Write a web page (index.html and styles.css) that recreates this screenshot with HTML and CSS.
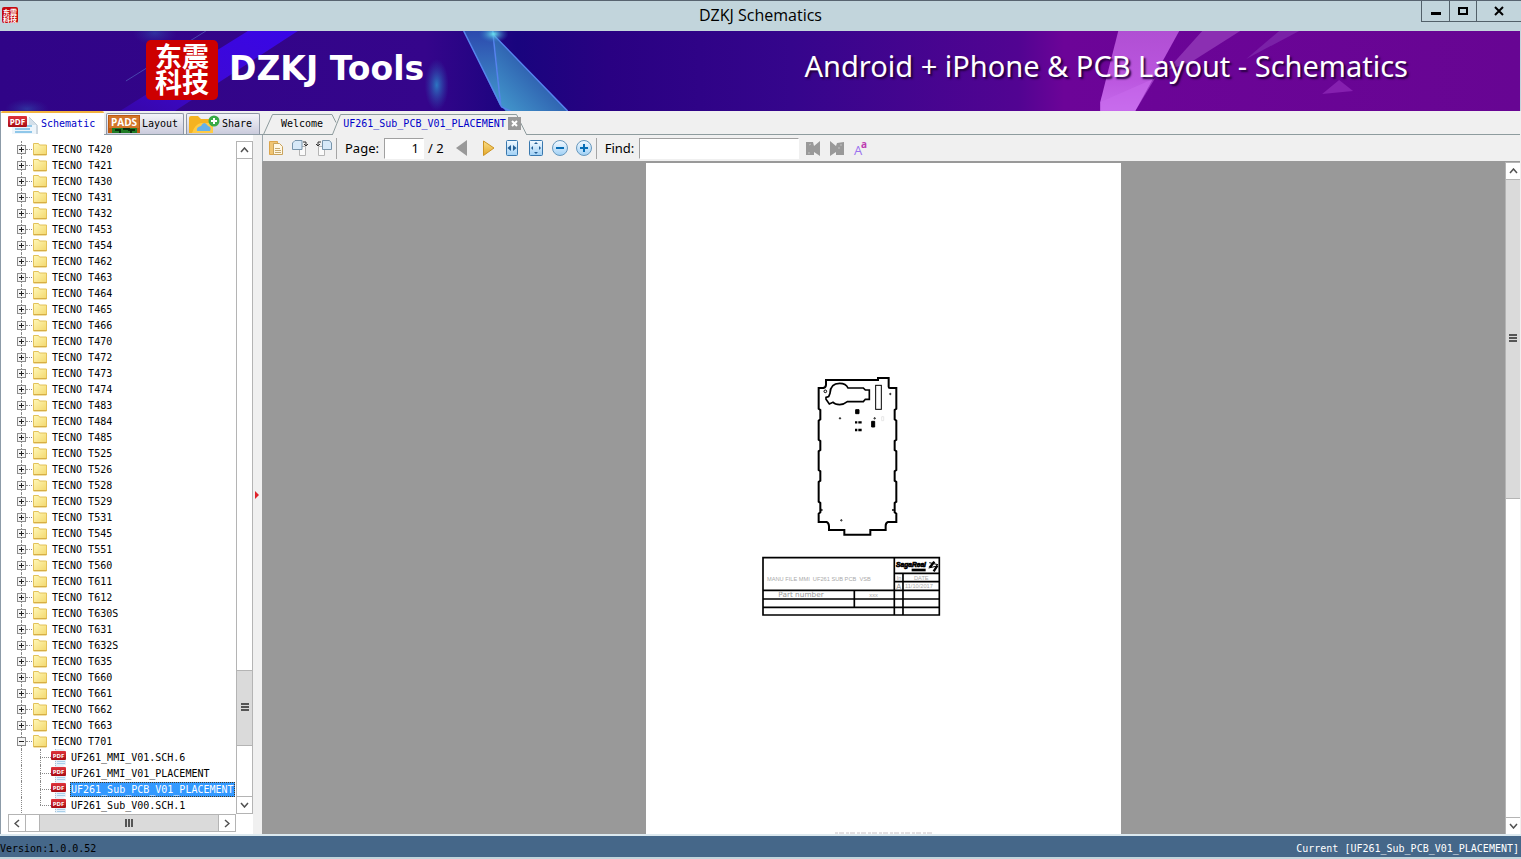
FILE: index.html
```html
<!DOCTYPE html>
<html lang="en">
<head>
<meta charset="utf-8">
<title>DZKJ Schematics</title>
<link rel="stylesheet" href="styles.css">
</head>
<body>
<svg class="defs" aria-hidden="true">
  <defs>
    <linearGradient id="folderFill" x1="0" y1="0" x2="1" y2="1"><stop offset="0" stop-color="#fff8b8"/><stop offset="1" stop-color="#f3d76c"/></linearGradient>
    <linearGradient id="redFill" x1="0" y1="0" x2="0" y2="1"><stop offset="0" stop-color="#e0343c"/><stop offset="1" stop-color="#a80c14"/></linearGradient>
    <linearGradient id="paleBlue" x1="0" y1="0" x2="0" y2="1"><stop offset="0" stop-color="#f4faff"/><stop offset="1" stop-color="#9fd0f5"/></linearGradient>
    <linearGradient id="gold" x1="0" y1="0" x2="0" y2="1"><stop offset="0" stop-color="#fbe08a"/><stop offset="1" stop-color="#e2a72a"/></linearGradient>
    <symbol id="folder" viewBox="0 0 14 14"><path d="M.5 1.500h5l1 1.500h7v10H.5z" fill="url(#folderFill)" stroke="#e3c25a"/><path d="M1 12.500h12.500" stroke="#d6ae45"/></symbol>
    <symbol id="pdf" viewBox="0 0 16 16"><path d="M4 0h8l3 3v13H4z" fill="#e6f1fa"/><path d="M6 12.500h8M6 14.500h8" stroke="#a9d0ea"/><path d="M4.500 0v16" stroke="#a9bfd0" stroke-dasharray="1 1"/><rect y="2" width="15" height="9" rx="1" fill="url(#redFill)"/><text x="7.500" y="9" class="badge-small">PDF</text></symbol>
  </defs>
</svg>

<header class="titlebar">
  <svg class="app-icon" viewBox="0 0 16 16" aria-hidden="true"><rect width="16" height="16" rx="2" fill="#c5090f"/><text x="8" y="7.500" class="seal-small">东震</text><text x="8" y="14.500" class="seal-small">科技</text></svg>
  <h1>DZKJ Schematics</h1>
  <div class="window-buttons">
    <button aria-label="Minimize"><svg width="10" height="10"><path d="M0 7.500h10" stroke="#000" stroke-width="3"/></svg></button>
    <button aria-label="Maximize"><svg width="10" height="10"><path d="M1 2h8v6H1z" fill="none" stroke="#000" stroke-width="2"/></svg></button>
    <button class="close" aria-label="Close"><svg width="10" height="10"><path d="M1 1l8 8M9 1L1 9" stroke="#000" stroke-width="2"/></svg></button>
  </div>
</header>

<section class="banner">
  <svg class="banner-art" viewBox="0 0 1521 80" preserveAspectRatio="none" aria-hidden="true">
    <defs>
      <linearGradient id="sky"><stop offset="0" stop-color="#300487"/><stop offset=".28" stop-color="#35058b"/><stop offset=".34" stop-color="#19047e"/><stop offset=".4" stop-color="#290182"/><stop offset=".52" stop-color="#35058c"/><stop offset=".67" stop-color="#520492"/><stop offset=".7" stop-color="#6c0498"/><stop offset="1" stop-color="#670593"/></linearGradient>
      <linearGradient id="beam" x1="1" y1="0" x2="0" y2="1"><stop offset="0" stop-color="#3906e6"/><stop offset=".5" stop-color="#3d08d8"/><stop offset="1" stop-color="#3706a8"/></linearGradient>
      <linearGradient id="shard" x1="0" y1="0" x2="0" y2="1"><stop offset="0" stop-color="#2c49ae"/><stop offset="1" stop-color="#429ccc"/></linearGradient>
      <linearGradient id="shard2" x1="1" y1="0" x2="0" y2="1"><stop offset="0" stop-color="#1c2a94"/><stop offset="1" stop-color="#459fd0"/></linearGradient>
      <linearGradient id="pink" x1="0" y1="0" x2="0" y2="1"><stop offset="0" stop-color="#b04fd3"/><stop offset=".6" stop-color="#bb56df"/><stop offset="1" stop-color="#c66cec"/></linearGradient>
      <radialGradient id="glow"><stop offset="0" stop-color="#2c82c8" stop-opacity=".9"/><stop offset="1" stop-color="#2c54b0" stop-opacity="0"/></radialGradient>
      <radialGradient id="spark"><stop offset="0" stop-color="#6be4ef"/><stop offset="1" stop-color="#2b6cc0" stop-opacity="0"/></radialGradient>
    </defs>
    <rect width="1521" height="80" fill="url(#sky)"/>
    <path d="M248 0h50L175 80h-55z" fill="url(#beam)"/>
    <path d="M206 0L126 50" stroke="#5260bd" stroke-width="1" opacity=".7"/>
    <ellipse cx="155" cy="2" rx="22" ry="12" fill="url(#glow)" opacity=".4"/>
    <ellipse cx="27" cy="78" rx="22" ry="10" fill="url(#glow)" opacity=".4"/>
    <ellipse cx="437" cy="54" rx="12" ry="26" fill="url(#glow)"/>
    <path d="M464 0h30l7 76z" fill="url(#shard)"/>
    <path d="M494 4L568 80h-62l-5-6z" fill="url(#shard2)"/>
    <path d="M464 0l38 76 9 4M493 0l8 74M494 4l74 76" fill="none" stroke="#5684ee" stroke-width="1.500"/>
    <ellipse cx="494" cy="3" rx="15" ry="9" fill="url(#spark)"/>
    <path d="M1119 0h61l-44 80h-35v-9z" fill="url(#pink)"/>
    <path d="M1203 0h38l-49 31-24 8z" fill="#8b2fb2"/>
    <path d="M1280 0h20l-53 28z" fill="#7a21a7"/>
    <path d="M1101 71l55-24-20 33h-35z" fill="#c96bee" opacity=".5"/>
    <path d="M1323 63l17-14 14 11z" fill="#8520af"/>
  </svg>
  <div class="seal"><span>东震</span><span>科技</span></div>
  <strong class="brand">DZKJ Tools</strong>
  <p class="tagline">Android + iPhone &amp; PCB Layout - Schematics</p>
</section>

<main class="workspace">
  <aside class="sidebar">
    <nav class="side-tabs">
      <button class="side-tab active">
        <svg width="32" height="20" viewBox="0 0 32 20"><path d="M5 4h16l10 9v7H5z" fill="#eef5fb"/><path d="M22 3l8 8v9" fill="none" stroke="#a7b8c6"/><path d="M22 3v8h8z" fill="#d4e0ea"/><path d="M8 15h15M8 18h17M20 12h5" stroke="#8fc7e9" stroke-width="2"/><rect x="1" y="2" width="19" height="11" rx="1" fill="url(#redFill)"/><text x="10.500" y="10.500" class="badge">PDF</text></svg>Schematic
      </button>
      <button class="side-tab layout">
        <svg width="32" height="18" viewBox="0 0 32 18"><rect width="32" height="18" fill="#bd5a12"/><rect x="1" y="1" width="30" height="12" fill="#d27529"/><path d="M4 13h25v5H4z" fill="#207d25"/><path d="M7 15h5v3M15 14h6v2M23 18v-3h4" fill="none" stroke="#082f0c" stroke-width="2"/><text x="16" y="11" class="badge pads">PADS</text></svg>Layout
      </button>
      <button class="side-tab share">
        <svg width="32" height="18" viewBox="0 0 32 18"><path d="M1 3q0-2 2-2h7l3 3h12v14H1z" fill="#f5b321"/><path d="M4 18q3-9 9-10h12v10z" fill="#ffcb45"/><path d="M9 16q-1-4 4-5 3-6 7 0 4 1 2 5z" fill="#67b1e8"/><circle cx="26" cy="6" r="5.500" fill="#38aa45"/><path d="M26 3v6M23 6h6" stroke="#fff" stroke-width="2"/></svg>Share
      </button>
    </nav>
    <div class="tree-area">
      <ul class="tree" id="tree"></ul>
      <div class="scroll vertical">
        <button aria-label="Scroll up"><svg width="9" height="6"><path d="M1 5l3.500-4L8 5" class="chevron"/></svg></button>
        <div class="track tree-track"><div class="thumb"><svg width="8" height="9"><path d="M0 1h8M0 4h8M0 7h8" class="grip"/></svg></div></div>
        <button aria-label="Scroll down"><svg width="9" height="6"><path d="M1 1l3.500 4L8 1" class="chevron"/></svg></button>
      </div>
      <div class="scroll horizontal">
        <button aria-label="Scroll left"><svg width="6" height="9"><path d="M5 1L1 4.500 5 8" class="chevron"/></svg></button>
        <div class="track"><div class="thumb"><svg width="9" height="8"><path d="M1 0v8M4 0v8M7 0v8" class="grip"/></svg></div></div>
        <button aria-label="Scroll right"><svg width="6" height="9"><path d="M1 1l4 3.500L1 8" class="chevron"/></svg></button>
      </div>
    </div>
    <button class="collapse" aria-label="Collapse panel"><svg width="6" height="8"><path d="M1 0l4 4-4 4z" fill="#e0222a"/></svg></button>
  </aside>

  <section class="document">
    <nav class="doc-tabs">
      <svg class="tab-outline" width="270" height="24" aria-hidden="true"><path d="M1.500 23.500l9-20H70l4 8" fill="none" stroke="#8e9c9e"/><path d="M70.500 23.500l8-20h176l10 20z" fill="#f0f0f0"/><path d="M0 23.500h70.500l8-20h176l10 20H270" fill="none" stroke="#8e9c9e"/><path d="M71 23.500h193" stroke="#f0f0f0"/></svg>
      <button class="doc-tab welcome">Welcome</button>
      <button class="doc-tab current">UF261_Sub_PCB_V01_PLACEMENT</button>
      <button class="tab-close" aria-label="Close tab"><svg width="7" height="7"><path d="M1 1l5 5M6 1L1 6" stroke="#fff" stroke-width="2"/></svg></button>
    </nav>
    <div class="toolbar">
      <button class="tool" aria-label="Open"><svg width="16" height="16"><path d="M1.500 1.500h8v13h-8z" fill="#f0c573" stroke="#dca54b"/><path d="M5.500 3.500h6l3 3v8h-9z" fill="#fff8e5" stroke="#c9a35c"/><path d="M7 8.500h5M7 10.500h6M7 12.500h6" stroke="#c7aa70"/></svg></button>
      <button class="tool" aria-label="Rotate right"><svg width="16" height="16"><path d="M7.500 6.500h6v9h-6z" fill="#fafafa" stroke="#b5b5b5"/><path d="M3 .5h7v9H.5V3z" fill="#d7e9f8" stroke="#7895ac"/><path d="M11 2h3v3M12 4l2 2 2-2" fill="none" stroke="#333"/></svg></button>
      <button class="tool" aria-label="Rotate left"><svg width="16" height="16"><path d="M2.500 6.500h6v9h-6z" fill="#fafafa" stroke="#b5b5b5"/><path d="M6.500 .5h7l2 2.500v6.500h-9z" fill="#d7e9f8" stroke="#7895ac"/><path d="M5 2H2v3M0 4l2 2 2-2" fill="none" stroke="#333"/></svg></button>
      <span class="separator"></span>
      <label for="page">Page:</label><input id="page" class="page-input" type="text" value="1"><span class="total">/ 2</span>
      <button class="tool" aria-label="Previous page"><svg width="16" height="16"><path d="M13 0v16L2 8z" fill="#999"/></svg></button>
      <button class="tool next" aria-label="Next page"><svg width="16" height="16"><path d="M3.500 1L14 8 3.500 15.500z" fill="url(#gold)" stroke="#cd9423"/></svg></button>
      <button class="tool" aria-label="Fit width"><svg width="16" height="16"><rect x="2.500" y=".5" width="11" height="15" rx="1" fill="url(#paleBlue)" stroke="#3978ae"/><path d="M7 5v6L3.500 8zM9 5v6l3.500-3z" fill="#245f95"/></svg></button>
      <button class="tool" aria-label="Fit page"><svg width="16" height="16"><rect x="1.500" y=".5" width="13" height="15" rx="1" fill="url(#paleBlue)" stroke="#3978ae"/><path d="M8 2l2 2H6zM8 14l2-2H6zM3 8l2-2v4zM13 8l-2-2v4z" fill="#245f95"/></svg></button>
      <button class="tool" aria-label="Zoom out"><svg width="16" height="16"><circle cx="8" cy="8" r="7.500" fill="url(#paleBlue)" stroke="#6798bd"/><path d="M4 8h8" stroke="#076db5" stroke-width="2"/></svg></button>
      <button class="tool" aria-label="Zoom in"><svg width="16" height="16"><circle cx="8" cy="8" r="7.500" fill="url(#paleBlue)" stroke="#6798bd"/><path d="M4 8h8M8 4v8" stroke="#076db5" stroke-width="2"/></svg></button>
      <span class="separator"></span>
      <label for="find">Find:</label><input id="find" class="find-input" type="text">
      <button class="tool" aria-label="Find previous"><svg width="16" height="16"><path d="M1 2h7l1 4 6-5v15l-6-4v3H1z" fill="#999"/><path d="M4 5l2-1M4 14v-2" stroke="#c2c2c2"/></svg></button>
      <button class="tool" aria-label="Find next"><svg width="16" height="16"><path d="M1 1l6 5 1-3 7-1v13H7v-3l-6 4z" fill="#999"/><path d="M11 5h2M9 8h2" stroke="#c2c2c2"/></svg></button>
      <button class="tool" aria-label="Match case"><svg class="case" width="16" height="16"><text x="1" y="15" class="case-large">A</text><text x="8" y="8" class="case-small">a</text></svg></button>
    </div>
    <div class="viewer">
      <div class="canvas">
        <svg class="sheet" viewBox="0 0 475 671" role="img" aria-label="UF261 sub PCB placement">
          <g transform="translate(154 207) scale(.3333)" fill="none" stroke="#000" stroke-width="6">
            <path d="M78 30H234V24H266V50Q266 54 270 54H289V116L284 120V148L289 152V209L284 213V240L289 244V300L284 304V332L289 336V395L284 399V427L289 431V456H264Q257 458 257 468V480H211V494H133V480H87V468Q86 458 80 456H56V431L61 427V399L56 395V336L61 332V304L56 300V244L61 240V213L56 209V152L61 148V120L56 116V54H70Q78 52 78 44Z"/>
            <path d="M86 80L90 70Q91 40 119 40Q138 40 144 54H190L196 60L208 60V88L196 88L190 95H142Q131 104 119 104Q105 104 99 97L88 102L78 88V82Z" stroke-width="5"/>
            <rect x="227" y="46" width="17" height="72" stroke-width="3"/>
            <g stroke-width="3"><circle cx="76" cy="64" r="4"/><circle cx="271" cy="72" r="2"/><circle cx="120" cy="145" r="2"/><circle cx="224" cy="145" r="2"/><circle cx="124" cy="451" r="2"/><circle cx="65" cy="420" r="2"/><circle cx="279" cy="420" r="2"/></g>
            <path d="M167 119h10v12h-10zM215 154h9v17h-9z" fill="#000" stroke-width="3"/>
            <path d="M165 157h7m3 0h10M165 180h7m3 0h10" stroke-width="7"/>
            <path d="M245 140h6v12h-6z" stroke="#ddd" stroke-width="2"/>
          </g>
          <g transform="translate(109 387) scale(.3333)">
            <path d="M24 23H553V195H24ZM24 121H553M24 147H553M24 172H553M418 23V195M444 70V195M418 70H553M298 121V172M418 95H553" fill="none" stroke="#000" stroke-width="5"/>
            <text x="36" y="93" class="drawing small">MANU FILE MMI&#160; UF261 SUB PCB&#160; VSB</text>
            <text x="70" y="141" class="drawing">Part number</text>
            <text x="343" y="140" class="drawing small">xxx</text>
            <text x="425" y="91" class="drawing small">In</text>
            <text x="477" y="91" class="drawing small">DATE</text>
            <text x="424" y="117" class="drawing">A</text>
            <text x="450" y="113" class="drawing small">11/10/2017</text>
            <text x="423" y="52" class="maker">SagaReal</text>
            <path d="M470 56h42v8h-42z"/>
            <path d="M521 51l14-18 6 4-13 17zM533 62l12-18 5 5-11 17z"/><path d="M523 38l26 6M521 54l26-6" stroke="#000" stroke-width="3"/>
          </g>
          <path d="M189 670h98" stroke="#c8c0c4" stroke-dasharray="3 1 5 2"/>
        </svg>
      </div>
      <div class="scroll vertical view-scroll">
        <button aria-label="Scroll page up"><svg width="9" height="6"><path d="M1 5l3.500-4L8 5" class="chevron"/></svg></button>
        <div class="track"><div class="thumb"><svg width="8" height="9"><path d="M0 1h8M0 4h8M0 7h8" class="grip"/></svg></div></div>
        <button aria-label="Scroll page down"><svg width="9" height="6"><path d="M1 1l3.500 4L8 1" class="chevron"/></svg></button>
      </div>
    </div>
  </section>
</main>

<footer class="status"><span>Version:1.0.0.52</span><span class="open-file">Current [UF261_Sub_PCB_V01_PLACEMENT]</span></footer>
<script src="tree.js"></script>
</body>
</html>
```

FILE: styles.css
```css
* { box-sizing: border-box; }

body {
  margin: 0;
  height: 100vh;
  display: flex;
  flex-direction: column;
  overflow: hidden;
  background: #c2d5dc;
  color: #000;
  font: 10px/16px "DejaVu Sans Mono", "Liberation Mono", monospace;
}

button { margin: 0; padding: 0; border: 0; background: none; color: inherit; font: inherit; }
svg { display: block; flex: none; }
.defs { position: absolute; width: 0; height: 0; }

.titlebar {
  flex: none;
  height: 31px;
  display: grid;
  grid-template-columns: 1fr auto 1fr;
  align-items: start;
  border-top: 1px solid #586470;
  background: #c2d5dc;
}
.app-icon { width: 16px; height: 16px; margin: 6px 2px; }
.seal-small { font: bold 7px "Noto Sans CJK SC", sans-serif; fill: #fff; text-anchor: middle; }
.titlebar h1 { margin: 0; font: 16px/28px "Open Sans", "Noto Sans", sans-serif; }
.window-buttons { justify-self: end; display: flex; border: 1px solid #526069; border-top: 0; border-right: 0; }
.window-buttons button { width: 27px; height: 20px; display: grid; place-items: center; border-left: 1px solid #526069; }
.window-buttons button:first-child { border-left: 0; }
.window-buttons .close { width: 45px; }

.banner { flex: none; position: relative; height: 80px; display: flex; align-items: center; padding: 0 112px 0 146px; overflow: hidden; margin-right: 1px; }
.banner-art { position: absolute; inset: 0; width: 100%; height: 100%; }
.seal, .brand, .tagline { position: relative; color: #fff; white-space: nowrap; }
.seal { width: 72px; height: 60px; margin-bottom: 2px; padding: 3px 0; border-radius: 5px; background: #cd0000; text-align: center; font: bold 27px/26px "Noto Sans CJK SC", sans-serif; }
.seal span { display: block; }
.brand { margin-left: 11px; padding-bottom: 4px; font: bold 33px/44px "DejaVu Sans", sans-serif; }
.tagline { margin: 0 0 10px auto; font: 29px/40px "Noto Sans", "Open Sans", sans-serif; text-shadow: 2px 2px 2px #24003d; }

.workspace { flex: 1; min-height: 0; display: flex; padding-right: 1px; border-bottom: 2px solid #dce9ef; background: #f0f0f0; }
.sidebar { position: relative; flex: none; width: 262px; display: flex; flex-direction: column; border-left: 1px solid #8c9ba8; }
.side-tabs { flex: none; height: 24px; display: flex; align-items: flex-end; gap: 2px; border-bottom: 1px solid #8e9ca5; }
.side-tab { height: 21px; display: flex; align-items: center; gap: 2px; padding: 0 4px 0 1px; border: 1px solid #8e96a5; border-bottom: 0; border-radius: 2px 2px 0 0; background: linear-gradient(#f4f4f9, #cacbdc); }
.side-tab.active { width: 103px; height: 24px; margin-bottom: -1px; padding: 0 0 0 6px; border: 0; border-top: 2px solid #f2b13d; background: #fff; color: #0000c8; }
.side-tab.layout { width: 78px; }
.side-tab.share { width: 74px; }
.badge, .badge-small { font: bold 8px "Open Sans", sans-serif; fill: #fff; text-anchor: middle; }
.badge.pads { font-size: 10px; }
.badge-small { font-size: 6px; }

.tree-area { flex: 1; min-height: 0; display: grid; grid-template: minmax(0, 1fr) 18px / minmax(0, 1fr) 17px; margin-right: 9px; padding: 6px 0 2px 7px; background: #fff; }
.tree { margin: 0; padding: 0; list-style: none; overflow: hidden; }
.tree-row { position: relative; height: 16px; display: flex; align-items: center; padding-left: 9px; white-space: pre; }
.tree-row::before { content: ""; position: absolute; left: 13px; top: 0; bottom: 0; border-left: 1px dotted #888; }
.expander { position: relative; width: 9px; height: 9px; border: 1px solid #8c8c8c; background: #f5f5f5; }
.expander svg { width: 7px; height: 7px; }
.branch { width: 6px; margin-right: 1px; border-top: 1px dotted #888; }
.tree-row .folder { width: 14px; height: 14px; margin-right: 3px; }
.label { height: 15px; padding: 0 1px 0 2px; line-height: 15px; }
.tree-row.child { padding-left: 32px; }
.tree-row.child::after { content: ""; position: absolute; left: 32px; top: 0; bottom: 0; border-left: 1px dotted #888; }
.tree-row.child:last-child::after { bottom: 8px; }
.child .branch { width: 11px; margin: 0; }
.child .pdf { width: 16px; height: 16px; margin-right: 3px; }
.child .label { padding-left: 1px; }
.selected .label { background: #3399ff; color: #fff; outline: 1px dotted #4b3a20; outline-offset: -1px; }

.scroll { display: flex; background: #fff; border: 1px solid #b4b4b4; }
.scroll.vertical { flex-direction: column; }
.scroll button { flex: none; width: 16px; height: 16px; display: grid; place-items: center; background: #fff; }
.scroll.vertical > button { width: 100%; }
.track { flex: 1; min-height: 0; display: flex; }
.vertical .track { flex-direction: column; border-top: 1px solid #b4b4b4; border-bottom: 1px solid #b4b4b4; }
.thumb { flex: 1; display: grid; place-items: center; background: #dadada; }
.tree-track { justify-content: flex-end; padding-bottom: 50px; }
.tree-track .thumb { flex: 0 0 13%; border: 1px solid #b4b4b4; border-width: 1px 0; }
.horizontal .track { padding-left: 13px; border-left: 1px solid #b4b4b4; border-right: 1px solid #b4b4b4; }
.horizontal .thumb { border-left: 1px solid #b4b4b4; }
.chevron { fill: none; stroke: #505050; stroke-width: 1.5; }
.grip { stroke: #555; stroke-width: 2; }
.collapse { position: absolute; right: 2px; top: 380px; width: 6px; height: 8px; }

.document { flex: 1; min-width: 0; display: flex; flex-direction: column; }
.doc-tabs { position: relative; flex: none; height: 24px; display: flex; align-items: center; padding: 2px 0 0 19px; border-bottom: 1px solid #8e9c9e; }
.tab-outline { position: absolute; left: 0; top: 0; }
.doc-tab { position: relative; height: 16px; }
.doc-tab.current { margin-left: 20px; color: #0000c8; }
.tab-close { position: relative; width: 13px; height: 13px; margin-left: 2px; display: grid; place-items: center; background: #999; }

.toolbar { flex: none; height: 27px; display: flex; align-items: center; padding-left: 1px; border-left: 1px solid #9da8ad; border-bottom: 1px solid #999; font: 13px/20px "Noto Sans", "Open Sans", sans-serif; }
.tool { width: 24px; height: 24px; display: grid; place-items: center; }
.tool.next { margin-left: 2px; }
.separator { width: 1px; height: 21px; margin-right: 8px; background: #a5a5a5; }
.toolbar label { margin-right: 5px; white-space: nowrap; }
.toolbar input { height: 21px; padding: 0 4px; border: 1px solid #a0a0a0; border-right-color: #fff; border-bottom-color: #fff; border-radius: 0; background: #fff; font: inherit; color: #000; }
.toolbar .page-input { width: 40px; text-align: right; }
.find-input { width: 160px; margin-right: 2px; }
.total { margin: 0 6px 0 4px; white-space: nowrap; }
.case { overflow: visible; }
.case-large { font: 13px "Open Sans", sans-serif; fill: #9b72ef; }
.case-small { font: bold 10px "Open Sans", sans-serif; fill: #bd3db2; }

.viewer { flex: 1; min-height: 0; display: flex; background: #999; }
.canvas { flex: 1; min-width: 0; display: flex; justify-content: center; align-items: flex-start; padding-top: 1px; overflow: hidden; }
.sheet { width: 475px; min-height: 100%; background: #fff; }
.drawing { font: 22px "DejaVu Sans", sans-serif; fill: #999; }
.drawing.small { font: 17px "Liberation Sans", sans-serif; fill: #aaa; }
.maker { font: italic bold 20px "Liberation Sans", sans-serif; fill: #000; stroke: #000; stroke-width: 2; }
.view-scroll { flex: none; width: 15px; border-right: 0; border-bottom: 0; }
.view-scroll .thumb { flex: 0 0 50%; border-bottom: 1px solid #b4b4b4; }

.status { flex: none; height: 23px; display: flex; justify-content: space-between; align-items: center; padding: 5px 2px 0 0; border-bottom: 2px solid #c2d5dc; background: #456789; }
.open-file { color: #fff; }
```

FILE: tree.js
```js
const folders = ["T420", "T421", "T430", "T431", "T432", "T453", "T454", "T462", "T463", "T464", "T465", "T466", "T470", "T472", "T473", "T474", "T483", "T484", "T485", "T525", "T526", "T528", "T529", "T531", "T545", "T551", "T560", "T611", "T612", "T630S", "T631", "T632S", "T635", "T660", "T661", "T662", "T663", "T701"];
const files = ["UF261_MMI_V01.SCH.6", "UF261_MMI_V01_PLACEMENT", "UF261_Sub_PCB_V01_PLACEMENT", "UF261_Sub_V00.SCH.1"];

const folderRow = (name) => {
  const open = name === "T701";
  const sign = open ? "M1 3.5h5" : "M1 3.5h5M3.5 1v5";
  return `<li class="tree-row"><button class="expander" aria-label="${open ? "Collapse" : "Expand"} ${name}"><svg><path d="${sign}" stroke="#222"/></svg></button><span class="branch"></span><svg class="folder"><use href="#folder"/></svg><span class="label">TECNO ${name}</span></li>`;
};

const fileRow = (name, index) =>
  `<li class="tree-row child${index === 2 ? " selected" : ""}"><span class="branch"></span><svg class="pdf"><use href="#pdf"/></svg><span class="label">${name}</span></li>`;

document.getElementById("tree").innerHTML = folders.map(folderRow).join("") + files.map(fileRow).join("");
```
